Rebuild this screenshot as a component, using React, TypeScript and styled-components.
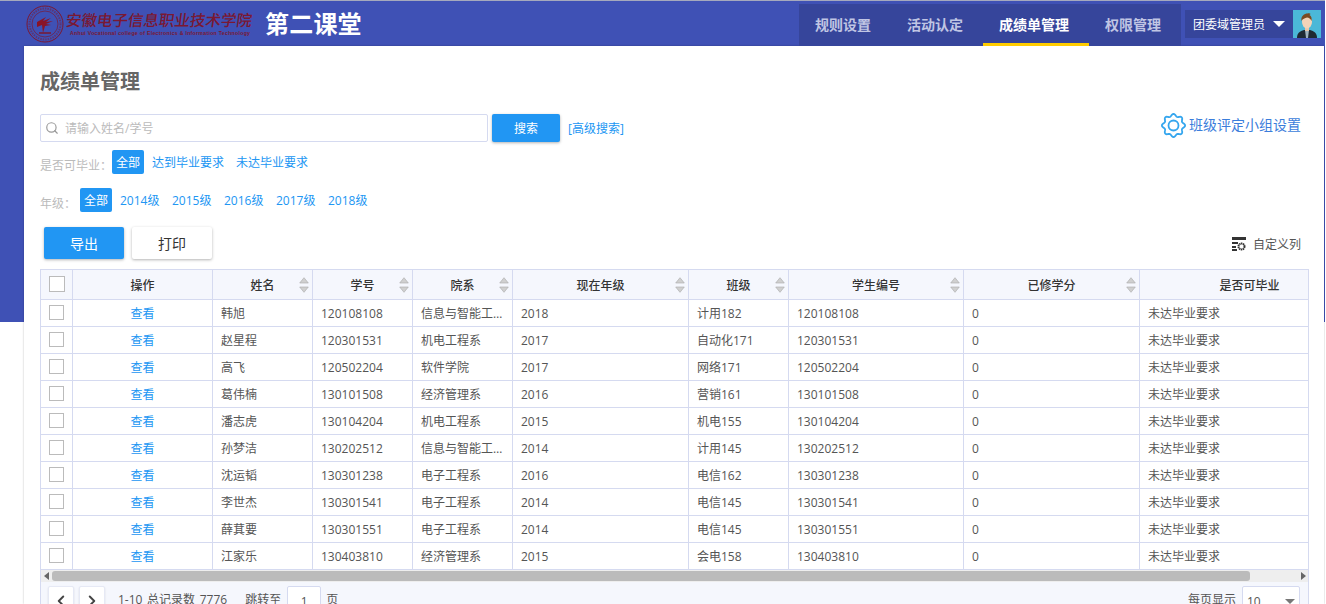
import styled, { createGlobalStyle } from "styled-components";
import { ChevronLeft, ChevronRight, Search } from "lucide-react";

const GlobalStyle = createGlobalStyle`
  html, body {
    margin: 0;
    height: 604px;
    overflow: hidden;
    background: #fff;
  }
  body, input, button {
    font-family: "Open Sans", "Noto Sans CJK SC", sans-serif;
  }
`;

const Page = styled.div`
  width: 1325px;
  height: 604px;
  overflow: hidden;
  background: linear-gradient(#3f51b5 322px, #fff 322px);
`;

const Header = styled.header`
  display: flex;
  align-items: center;
  height: 45px;
  padding: 0 4px 0 26px;
  border-top: 1px solid #a5a9bd;
`;

const Logo = styled.div`
  display: flex;
  align-items: center;
  gap: 2px;
`;

const LogoText = styled.div`
  display: flex;
  flex-direction: column;
  width: 186px;
  color: #7a1832;
`;

const LogoName = styled.span`
  font-size: 15.5px;
  line-height: 19px;
  font-weight: 500;
  white-space: nowrap;
  transform: skewX(-8deg);
`;

const LogoEnglish = styled.span`
  font-family: "Liberation Sans", sans-serif;
  font-size: 5.2px;
  line-height: 7px;
  font-weight: 700;
  letter-spacing: 0.28px;
  white-space: nowrap;
  margin-left: 4px;
`;

const AppTitle = styled.h1`
  margin: 0 0 0 13px;
  color: #fff;
  font-size: 24px;
  line-height: 30px;
  font-weight: 700;
  letter-spacing: 0.2px;
`;

const Nav = styled.nav`
  display: flex;
  gap: 36px;
  align-self: flex-end;
  height: 42px;
  margin-left: auto;
  padding: 0 20px 0 16px;
  background: #36459b;
`;

const NavItem = styled.a<{ $active?: boolean }>`
  position: relative;
  font-size: 14px;
  font-weight: 700;
  line-height: 42px;
  color: ${(p) => (p.$active ? "#fff" : "#c0c5e4")};
  &::after {
    content: "";
    display: ${(p) => (p.$active ? "block" : "none")};
    position: absolute;
    left: -16px;
    right: -20px;
    bottom: 0;
    height: 3px;
    background: #ffcc00;
  }
`;

const User = styled.div`
  display: flex;
  align-items: center;
  height: 28px;
  margin: 1px 0 0 4px;
  padding-left: 8px;
  background: #36459b;
  color: #fff;
  font-size: 12px;
`;

const Caret = styled.span`
  width: 0;
  height: 0;
  margin: 0 8px;
  border-left: 6px solid transparent;
  border-right: 6px solid transparent;
  border-top: 6px solid #fff;
`;

const Card = styled.main`
  width: 1268px;
  height: 558px;
  margin-left: 24px;
  padding: 0 16px;
  background: #fff;
  box-shadow: 0 0 2px rgba(0, 0, 0, 0.25);
`;

const Title = styled.h2`
  margin: 0;
  padding-top: 22px;
  font-size: 20px;
  line-height: 28px;
  font-weight: 700;
  color: #666;
`;

const SearchRow = styled.div`
  display: flex;
  align-items: center;
  height: 28px;
  margin-top: 18px;
`;

const SearchBox = styled.label`
  display: flex;
  align-items: center;
  gap: 6px;
  box-sizing: border-box;
  width: 448px;
  height: 28px;
  padding-left: 4px;
  border: 1px solid #d5daf0;
  border-radius: 2px;
  color: #999;
`;

const SearchInput = styled.input`
  flex: 1;
  border: 0;
  outline: 0;
  padding: 0;
  font-size: 12px;
  &::placeholder {
    color: #bbb;
  }
`;

const SearchButton = styled.button`
  width: 68px;
  height: 28px;
  margin: 0 8px 0 4px;
  border: 0;
  border-radius: 2px;
  background: #2196f3;
  color: #fff;
  font-size: 12px;
  box-shadow: 0 1px 3px rgba(0, 0, 0, 0.3);
`;

const AdvancedLink = styled.a`
  font-size: 12px;
  color: #2196f3;
`;

const GroupLink = styled.a`
  display: flex;
  align-items: center;
  gap: 3px;
  align-self: flex-start;
  margin: -2px 7px 0 auto;
  color: #3b7ddb;
  font-size: 14px;
  line-height: 26px;
`;

const FilterRow = styled.div<{ $top: number }>`
  display: flex;
  align-items: flex-start;
  height: 24px;
  margin-top: ${(p) => p.$top}px;
  font-size: 12px;
  line-height: 26px;
`;

const FilterLabel = styled.span`
  min-width: 40px;
  padding-top: 3px;
  color: #bbb;
`;

const FilterPill = styled.a`
  width: 32px;
  height: 24px;
  margin-right: 2px;
  border-radius: 2px;
  background: #2196f3;
  color: #fff;
  text-align: center;
`;

const FilterLink = styled.a`
  min-width: 40px;
  padding: 0 6px;
  color: #2196f3;
`;

const Toolbar = styled.div`
  display: flex;
  align-items: center;
  gap: 8px;
  height: 32px;
  margin-top: 15px;
  padding: 0 7px 0 4px;
`;

const ActionButton = styled.button<{ $primary?: boolean }>`
  width: 80px;
  height: 32px;
  border: 0;
  border-radius: 2px;
  background: ${(p) => (p.$primary ? "#2196f3" : "#fff")};
  color: ${(p) => (p.$primary ? "#fff" : "#333")};
  font-size: 14px;
  box-shadow: 0 1px 3px rgba(0, 0, 0, 0.3);
`;

const ColumnsLink = styled.a`
  display: flex;
  align-items: center;
  gap: 7px;
  margin: 0 0 -1px auto;
  font-size: 12px;
  color: #555;
`;

const TableWrap = styled.div`
  box-sizing: border-box;
  width: 1269px;
  margin-top: 10px;
  border: 1px solid #d5daf0;
  border-bottom: 0;
  overflow: hidden;
`;

const Table = styled.table`
  width: 1319px;
  table-layout: fixed;
  border-collapse: separate;
  border-spacing: 0;
  font-size: 12px;
`;

const HeadCell = styled.th`
  position: relative;
  box-sizing: border-box;
  height: 30px;
  padding: 0;
  border-right: 1px solid #d5daf0;
  border-bottom: 1px solid #d5daf0;
  background: #f5f7fd;
  color: #333;
  font-weight: 500;
  text-align: center;
`;

const Cell = styled.td<{ $center?: boolean }>`
  box-sizing: border-box;
  height: 27px;
  padding: 0 ${(p) => (p.$center ? "0" : "6px 0 8px")};
  border-right: 1px solid #d5daf0;
  border-bottom: 1px solid #d5daf0;
  color: #555;
  text-align: ${(p) => (p.$center ? "center" : "left")};
  white-space: nowrap;
  overflow: hidden;
  text-overflow: ellipsis;
`;

const CheckBox = styled.span<{ $size: number }>`
  display: block;
  box-sizing: border-box;
  width: ${(p) => p.$size}px;
  height: ${(p) => p.$size}px;
  margin: -2px 0 0 8px;
  border: 1px solid #bbb;
  background: #fff;
`;

const ViewLink = styled.a`
  color: #2196f3;
  font-size: 12px;
`;

const SortMark = styled.svg`
  position: absolute;
  right: 3px;
  top: 7px;
`;

const ScrollBar = styled.div`
  display: flex;
  align-items: center;
  height: 12px;
  background: #eee;
`;

const ScrollArrow = styled.span<{ $right?: boolean }>`
  width: 0;
  height: 0;
  margin: 0 ${(p) => (p.$right ? "2px 0 auto" : "0 0 3px")};
  border-top: 4px solid transparent;
  border-bottom: 4px solid transparent;
  ${(p) =>
    p.$right ? "border-left: 5px solid #666;" : "border-right: 5px solid #666;"}
`;

const ScrollThumb = styled.span`
  width: 1198px;
  height: 10px;
  margin-left: 3px;
  border-radius: 3px;
  background: #bbb;
`;

const Pager = styled.div`
  display: flex;
  align-items: flex-start;
  height: 40px;
  padding: 4px 8px 0 7px;
  background: #f5f7fd;
  font-size: 12px;
  color: #555;
`;

const PageButton = styled.button`
  display: flex;
  align-items: center;
  justify-content: center;
  width: 26px;
  height: 30px;
  margin-right: 5px;
  padding: 0;
  border: 1px solid #e6e9f5;
  border-radius: 2px;
  background: #fff;
  color: #444;
  box-shadow: 0 1px 2px rgba(0, 0, 0, 0.12);
`;

const PagerText = styled.span<{ $left: number }>`
  margin-left: ${(p) => p.$left}px;
  line-height: 28px;
  word-spacing: 1.5px;
`;

const JumpInput = styled.input`
  box-sizing: border-box;
  width: 34px;
  height: 30px;
  margin-left: 6px;
  border: 1px solid #d5daf0;
  border-radius: 2px;
  outline: 0;
  background: #fff;
  color: #555;
  font-size: 12px;
  text-align: center;
`;

const PageSize = styled.div`
  display: flex;
  align-items: center;
  justify-content: space-between;
  box-sizing: border-box;
  width: 58px;
  height: 30px;
  margin-left: 6px;
  padding: 0 4px;
  border: 1px solid #d5daf0;
  border-radius: 2px;
  background: #fff;
`;

const PageSizeCaret = styled.span`
  width: 0;
  height: 0;
  border-left: 5px solid transparent;
  border-right: 5px solid transparent;
  border-top: 5px solid #777;
`;

const Spacer = styled.span`
  flex: 1;
`;

const columns: { title: string; width: number; sort?: boolean }[] = [
  { title: "操作", width: 140 },
  { title: "姓名", width: 100, sort: true },
  { title: "学号", width: 100, sort: true },
  { title: "院系", width: 100, sort: true },
  { title: "现在年级", width: 176, sort: true },
  { title: "班级", width: 100, sort: true },
  { title: "学生编号", width: 175, sort: true },
  { title: "已修学分", width: 176, sort: true },
  { title: "是否可毕业", width: 220 },
];

const rows = [
  ["韩旭", "120108108", "信息与智能工程系", "2018", "计用182"],
  ["赵星程", "120301531", "机电工程系", "2017", "自动化171"],
  ["高飞", "120502204", "软件学院", "2017", "网络171"],
  ["葛伟楠", "130101508", "经济管理系", "2016", "营销161"],
  ["潘志虎", "130104204", "机电工程系", "2015", "机电155"],
  ["孙梦洁", "130202512", "信息与智能工程系", "2014", "计用145"],
  ["沈运韬", "130301238", "电子工程系", "2016", "电信162"],
  ["李世杰", "130301541", "电子工程系", "2014", "电信145"],
  ["薛萁要", "130301551", "电子工程系", "2014", "电信145"],
  ["江家乐", "130403810", "经济管理系", "2015", "会电158"],
];

const grades = ["2014级", "2015级", "2016级", "2017级", "2018级"];

// wavy outline of the settings icon
const gearPath = () => {
  const points: string[] = [];
  for (let i = 0; i < 96; i++) {
    const a = (i / 96) * Math.PI * 2;
    const r = 10.4 + 1.2 * Math.cos(a * 8);
    points.push(`${(12.5 + r * Math.cos(a)).toFixed(2)},${(12.5 + r * Math.sin(a)).toFixed(2)}`);
  }
  return `M${points.join("L")}Z`;
};

function Seal() {
  return (
    <svg width="38" height="38" viewBox="0 0 38 38">
      <circle cx="19" cy="19" r="18" fill="none" stroke="#7a1832" strokeWidth="1" />
      <circle cx="19" cy="19" r="15.5" fill="none" stroke="#7a1832" strokeWidth="2" strokeDasharray="1.5 1" opacity="0.5" />
      <circle cx="19" cy="19" r="13" fill="none" stroke="#7a1832" strokeWidth="0.7" />
      <path
        d="M11 17l9-5-3 4 8-3-5 4 7-1-7 3 5 1-6 1-2 7-1-8-5 2z"
        fill="#8a1428"
      />
      <path d="M13 28h12" stroke="#7a1832" strokeWidth="1.5" />
    </svg>
  );
}

function Avatar() {
  return (
    <svg width="28" height="28" viewBox="0 0 28 28">
      <rect width="28" height="28" fill="#4bb8d8" />
      <path d="M4 28c0-5 3-7 7-8h6c4 1 7 3 7 8z" fill="#1f2a33" />
      <path d="M12 20h4l-1 8h-2z" fill="#9fb2bd" />
      <rect x="12" y="15" width="4" height="6" fill="#eac6a8" />
      <ellipse cx="14" cy="12" rx="5" ry="6.5" fill="#f2d3b8" />
      <path d="M8.5 11c-1-5 3-7.500 6-7.500 1.500-.5 3 .5 3 .5l-1 1c2 1 2.500 3.500 2 6-1-2-2.500-3.500-4.500-3.500-2 1-4.500 1-5.500 3.500z" fill="#7a4a22" />
    </svg>
  );
}

function SortIcon() {
  return (
    <SortMark width="10" height="16" viewBox="0 0 10 16">
      <path d="M5 .7l4.300 5.300H.7z" fill="#d0d0d0" stroke="#a8a8a8" strokeWidth="0.6" />
      <path d="M5 15.300l4.300-5.300H.7z" fill="#d0d0d0" stroke="#a8a8a8" strokeWidth="0.6" />
    </SortMark>
  );
}

function ColumnsIcon() {
  return (
    <svg width="14" height="14" viewBox="0 0 14 14">
      <path d="M0 0h14v3H0zM0 5h6v2H0zM0 9h4v2H0zM0 12h5v2H0z" fill="#333" />
      <circle cx="9.500" cy="9.500" r="3" fill="none" stroke="#333" strokeWidth="2" strokeDasharray="1.400 0.500" />
    </svg>
  );
}

export default function App() {
  return (
    <Page>
      <GlobalStyle />
      <Header>
        <Logo>
          <Seal />
          <LogoText>
            <LogoName>安徽电子信息职业技术学院</LogoName>
            <LogoEnglish>Anhui Vocational college of Electronics &amp; Information Technology</LogoEnglish>
          </LogoText>
        </Logo>
        <AppTitle>第二课堂</AppTitle>
        <Nav>
          <NavItem>规则设置</NavItem>
          <NavItem>活动认定</NavItem>
          <NavItem $active>成绩单管理</NavItem>
          <NavItem>权限管理</NavItem>
        </Nav>
        <User>
          团委域管理员
          <Caret />
          <Avatar />
        </User>
      </Header>
      <Card>
        <Title>成绩单管理</Title>
        <SearchRow>
          <SearchBox>
            <Search size={14} />
            <SearchInput placeholder="请输入姓名/学号" />
          </SearchBox>
          <SearchButton>搜索</SearchButton>
          <AdvancedLink>[高级搜索]</AdvancedLink>
          <GroupLink>
            <svg width="25" height="25" viewBox="0 0 25 25" fill="none" stroke="#35a6ee" strokeWidth="1.8">
              <path d={gearPath()} />
              <circle cx="12.500" cy="12.500" r="5" />
            </svg>
            班级评定小组设置
          </GroupLink>
        </SearchRow>
        <FilterRow $top={8}>
          <FilterLabel>是否可毕业：</FilterLabel>
          <FilterPill>全部</FilterPill>
          <FilterLink>达到毕业要求</FilterLink>
          <FilterLink>未达毕业要求</FilterLink>
        </FilterRow>
        <FilterRow $top={14}>
          <FilterLabel>年级：</FilterLabel>
          <FilterPill>全部</FilterPill>
          {grades.map((g) => (
            <FilterLink key={g}>{g}</FilterLink>
          ))}
        </FilterRow>
        <Toolbar>
          <ActionButton $primary>导出</ActionButton>
          <ActionButton>打印</ActionButton>
          <ColumnsLink>
            <ColumnsIcon />
            自定义列
          </ColumnsLink>
        </Toolbar>
        <TableWrap>
          <Table>
            <colgroup>
              <col style={{ width: 32 }} />
              {columns.map((c) => (
                <col key={c.title} style={{ width: c.width }} />
              ))}
            </colgroup>
            <thead>
              <tr>
                <HeadCell>
                  <CheckBox $size={16} />
                </HeadCell>
                {columns.map((c) => (
                  <HeadCell key={c.title}>
                    {c.title}
                    {c.sort && <SortIcon />}
                  </HeadCell>
                ))}
              </tr>
            </thead>
            <tbody>
              {rows.map((r) => (
                <tr key={r[1]}>
                  <Cell $center>
                    <CheckBox $size={15} />
                  </Cell>
                  <Cell $center>
                    <ViewLink>查看</ViewLink>
                  </Cell>
                  <Cell>{r[0]}</Cell>
                  <Cell>{r[1]}</Cell>
                  <Cell>{r[2]}</Cell>
                  <Cell>{r[3]}</Cell>
                  <Cell>{r[4]}</Cell>
                  <Cell>{r[1]}</Cell>
                  <Cell>0</Cell>
                  <Cell>未达毕业要求</Cell>
                </tr>
              ))}
            </tbody>
          </Table>
          <ScrollBar>
            <ScrollArrow />
            <ScrollThumb />
            <ScrollArrow $right />
          </ScrollBar>
          <Pager>
            <PageButton>
              <ChevronLeft size={18} strokeWidth={2.5} />
            </PageButton>
            <PageButton>
              <ChevronRight size={18} strokeWidth={2.5} />
            </PageButton>
            <PagerText $left={8}>1-10 总记录数 7776</PagerText>
            <PagerText $left={18}>跳转至</PagerText>
            <JumpInput defaultValue="1" />
            <PagerText $left={5}>页</PagerText>
            <Spacer />
            <PagerText $left={0}>每页显示</PagerText>
            <PageSize>
              10
              <PageSizeCaret />
            </PageSize>
          </Pager>
        </TableWrap>
      </Card>
    </Page>
  );
}
